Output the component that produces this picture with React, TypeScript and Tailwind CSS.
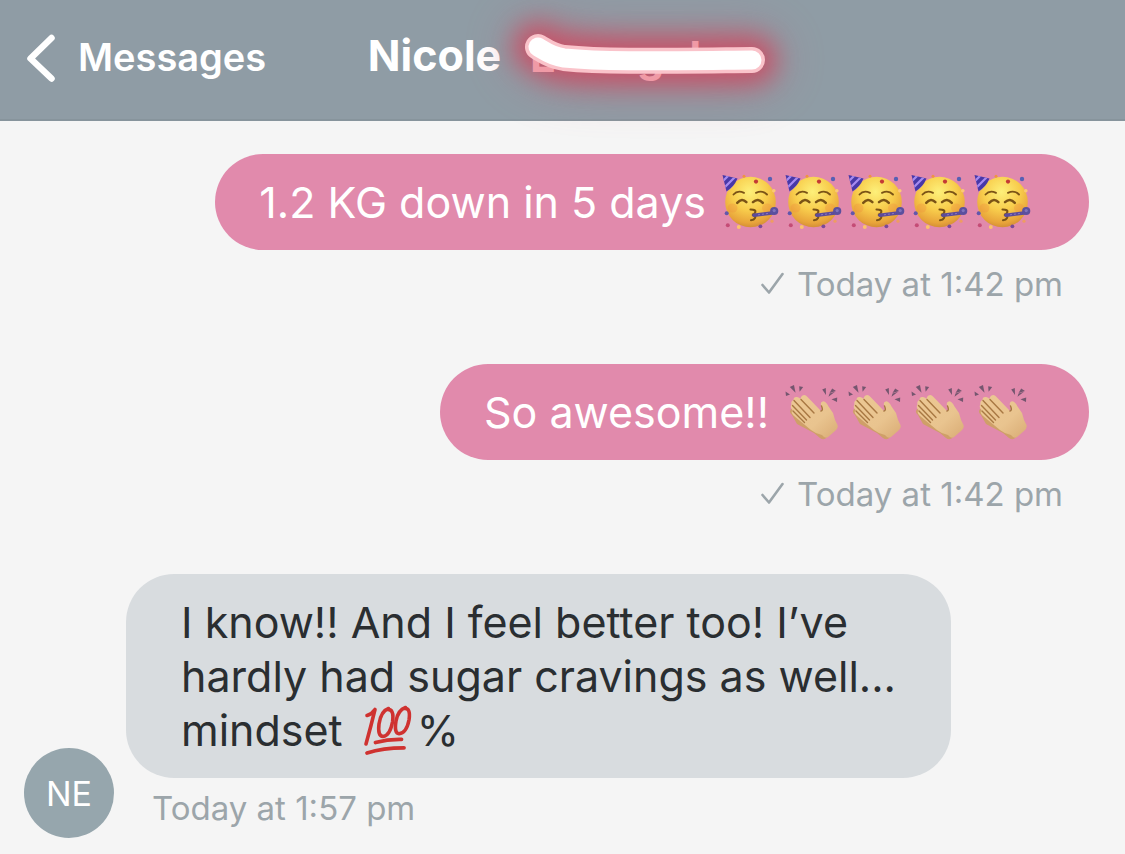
import type { ReactNode } from "react"

function PartyFace() {
  return (
    <svg viewBox="0 0 57 56" className="h-14 w-[57px] shrink-0" role="img" aria-label="partying face">
      <defs>
        <radialGradient id="party-skin" cx="0.48" cy="0.3" r="0.72">
          <stop offset="0" stopColor="#fdf07a" />
          <stop offset="0.5" stopColor="#f8cd4c" />
          <stop offset="0.85" stopColor="#e8a43a" />
          <stop offset="1" stopColor="#d08a35" />
        </radialGradient>
        <clipPath id="party-hat">
          <path d="M0.5 1 L15.5 4.5 Q12 13 4.5 17.5 Z" />
        </clipPath>
      </defs>
      <circle cx="28.5" cy="28" r="25.3" fill="url(#party-skin)" />
      <ellipse cx="10.5" cy="34" rx="5" ry="4.5" fill="#f08a3c" opacity="0.3" />
      <ellipse cx="45" cy="34" rx="5" ry="4.5" fill="#f08a3c" opacity="0.3" />
      <g clipPath="url(#party-hat)">
        <path d="M0 0h17v19H0z" fill="#4838a8" />
        <path d="M-1 9 L9 -1 M1 15 L15 1 M5 19 L19 6" stroke="#a78bf0" strokeWidth="2.2" />
      </g>
      <g fill="none" strokeLinecap="round" stroke="#7a5316">
        <path d="M11.5 20.5 Q15.5 15.8 22 18.8" strokeWidth="1.9" />
        <path d="M34 18.8 Q40.5 15.8 45 20.5" strokeWidth="1.9" />
        <path d="M15.2 28.8 Q20 23.5 24.4 28.2" strokeWidth="2.5" />
        <path d="M31 28.2 Q36 23.5 40.8 28.8" strokeWidth="2.5" />
        <path d="M28.5 35.5 Q34.5 35.5 33.2 38.5 Q32.5 40.5 30 40.7 Q34.5 41.5 33 44 Q32 46 29 46.2" strokeWidth="2.1" />
      </g>
      <path d="M32 41.2 L50 39" stroke="#5c4b9b" strokeWidth="3.6" strokeLinecap="round" />
      <path d="M36 40.8 L48 39.2" stroke="#8b78c0" strokeWidth="1" strokeDasharray="2 2" />
      <circle cx="52.2" cy="37" r="4.1" fill="#5b4f9e" />
      <circle cx="52.2" cy="36.6" r="1.6" fill="#7f73bd" />
      <circle cx="34" cy="7.6" r="2.1" fill="#c43b35" />
      <circle cx="48" cy="5" r="2.2" fill="#5760b4" />
      <circle cx="51.8" cy="16.8" r="1.8" fill="#fbc877" />
      <circle cx="22" cy="2.2" r="1.5" fill="#ef9440" />
      <circle cx="4.7" cy="39.3" r="2" fill="#6257ab" />
      <circle cx="5.8" cy="51.2" r="2" fill="#c44c76" />
      <circle cx="16.8" cy="53" r="2" fill="#fbc46b" />
      <circle cx="38.4" cy="52.3" r="1.9" fill="#7a4a97" />
      <circle cx="50" cy="47.2" r="1.6" fill="#ee9c62" />
    </svg>
  )
}

function ClappingHands() {
  return (
    <svg viewBox="0 0 57 58" className="h-[58px] w-[57px] shrink-0" role="img" aria-label="clapping hands">
      <defs>
        <linearGradient id="clap-skin" x1="0" y1="0" x2="1" y2="1">
          <stop offset="0" stopColor="#ecc894" />
          <stop offset="0.6" stopColor="#e9c48f" />
          <stop offset="1" stopColor="#d9ab74" />
        </linearGradient>
      </defs>
      <path
        d="M6 26 Q3.5 29 7 32 L12 41 L29 50 L35 55 Q39 58 42 54 L44 46 L30 30 Z"
        fill="#cf9f68"
      />
      <path
        d="M17.5 12.5 Q20 11 22.5 14 L36 28 Q38.5 27 36 22.5 Q35 18.5 38.5 18.2 Q41 18.5 43.5 23.5 L48 30 Q49.5 37 52.5 42 Q53.5 45 50 48 L43 54 Q40 56 37 52 Q31 51 26 47 L8.5 32.5 Q5.5 29.5 7.5 27 Q4.5 24 6.5 21.5 Q5.5 18 8.5 17 Q8.5 13.5 12 14 Q14.5 14.5 15.5 16 Q15.5 13.5 17.5 12.5 Z"
        fill="url(#clap-skin)"
      />
      <g stroke="#a87843" strokeWidth="1.4" strokeLinecap="round" fill="none">
        <path d="M16 16.5 L29 30" />
        <path d="M9 17.5 L25 34.5" />
        <path d="M7.5 22.5 L21.5 37" />
        <path d="M8 28 L19.5 39.5" />
        <path d="M36 28 Q38.5 27.5 36.5 23" />
      </g>
      <g fill="#75566f">
        <path d="M0.5 8.5 L5 11.5 L1 13 Z" />
        <path d="M4.8 4 L9 2 L10.5 9.8 Z" />
        <path d="M14.2 3.2 L18.2 4 L14.6 8.8 Z" />
        <path d="M37.2 6.4 L40.8 5 L41 12 Z" />
        <path d="M44.5 10 L47.2 5.4 L51 8 Z M44.5 10.5 L50 8.8 L43.5 13.8 Z" />
        <path d="M46.5 16.3 L52.2 14.6 L52 19 Z" />
      </g>
    </svg>
  )
}

function HundredPoints() {
  return (
    <svg viewBox="0 -2 50 54" className="mr-1 ml-2 inline-block h-[54px] w-[50px] align-top" role="img" aria-label="hundred points">
      <g fill="none" stroke="#cf3230" strokeLinecap="round" strokeLinejoin="round">
        <path d="M4 10.5 Q9 9 12 4.5 Q8 21 3 39" strokeWidth="3.6" />
        <path d="M25.5 3.5 Q18 6 16 19 Q14.5 31 20 31.5 Q27 30.5 29.5 17 Q31.5 3.5 24 4.5" strokeWidth="3.6" />
        <path d="M42.5 2.5 Q35 5 33 16 Q31 28.5 36 28.8 Q43.5 28 46 15 Q48 2.5 41 3.5" strokeWidth="3.6" />
        <path d="M12.5 37.5 Q25 34 38.5 34.3" strokeWidth="3.8" />
        <path d="M4 48 Q20 42.8 41 42.8" strokeWidth="3.8" />
      </g>
    </svg>
  )
}

// neon marker stroke over the surname, the glow spills out of the header
function Scribble() {
  const line = "M13 15 C20 19 25 24 39 26 C80 30 130 29 227 28"
  return (
    <svg viewBox="0 0 240 48" className="h-12 w-60 shrink-0 overflow-visible" aria-hidden="true">
      <defs>
        <filter id="glow-wide" x="-150" y="-150" width="540" height="350" filterUnits="userSpaceOnUse" colorInterpolationFilters="sRGB">
          <feGaussianBlur stdDeviation="24" />
        </filter>
        <filter id="glow-near" x="-80" y="-80" width="400" height="210" filterUnits="userSpaceOnUse" colorInterpolationFilters="sRGB">
          <feGaussianBlur stdDeviation="12" />
        </filter>
      </defs>
      <g fill="none" strokeLinecap="round" strokeLinejoin="round">
        <path d={line} stroke="#c8506a" strokeWidth="60" opacity="0.3" filter="url(#glow-wide)" />
        <path d={line} stroke="#cf465e" strokeWidth="48" opacity="0.8" filter="url(#glow-near)" />
      </g>
      <g className="text-[43px] font-bold" fill="#f09aa6">
        <text x="5" y="40">E</text>
        <text x="112" y="40">g</text>
        <text x="149" y="40">d</text>
      </g>
      <g fill="none" strokeLinecap="round" strokeLinejoin="round">
        <path d={line} stroke="#fac3ca" strokeWidth="26" />
        <path d={line} stroke="#ffffff" strokeWidth="19" />
      </g>
    </svg>
  )
}

function Sent({ time, children }: { time: string; children: ReactNode }) {
  return (
    <div className="flex flex-col items-end pr-9">
      <div className="flex h-24 items-center rounded-full bg-[#e18aac] pr-[58px] pl-11 text-[43px] text-white">{children}</div>
      <div className="mt-3 flex items-center pr-[26px] text-[33px] leading-11 text-[#9ca5aa]">
        <svg viewBox="0 0 24 24" className="mr-3 size-6" fill="none" stroke="currentColor" strokeWidth="2.6" aria-hidden="true">
          <path d="M1.5 13 L8 20.5 L21.5 2" strokeLinecap="round" strokeLinejoin="round" />
        </svg>
        <time>{time}</time>
      </div>
    </div>
  )
}

export default function App() {
  return (
    <div className="min-h-screen bg-[#f5f5f5] font-['Inter',sans-serif]">
      <header className="relative z-10 grid h-[121px] grid-cols-[1fr_auto_1fr] items-center border-b-2 border-[#87949c] bg-[#8f9ca5] pb-1 text-white">
        <a href="#" className="flex items-center gap-[22px] pl-6 text-[38px] font-semibold">
          <svg viewBox="0 0 32 50" className="h-[50px] w-8" fill="none" stroke="currentColor" strokeWidth="6.5" aria-hidden="true">
            <path d="M27.5 5 L6.5 25.5 L27.5 45.5" strokeLinecap="round" strokeLinejoin="round" />
          </svg>
          Messages
        </a>
        <h1 className="flex items-center gap-6 pb-1 pl-2 text-[43px] font-bold">
          Nicole
          <Scribble />
        </h1>
      </header>

      <main className="pt-[33px]">
        <div className="flex flex-col gap-[58px]">
          <Sent time="Today at 1:42 pm">
            1.2 KG down in 5 days
            <span className="ml-4 flex gap-[6px]">
              <PartyFace />
              <PartyFace />
              <PartyFace />
              <PartyFace />
              <PartyFace />
            </span>
          </Sent>
          <Sent time="Today at 1:42 pm">
            So awesome!!
            <span className="ml-4 flex gap-[6px]">
              <ClappingHands />
              <ClappingHands />
              <ClappingHands />
              <ClappingHands />
            </span>
          </Sent>
          <div className="flex items-end gap-3 pb-4 pl-6">
            <div className="flex size-[90px] shrink-0 items-center justify-center rounded-full bg-[#96a6ad] text-[34px] text-white">NE</div>
            <div className="pb-2">
              <p className="max-w-[825px] rounded-[48px] bg-[#d8dcdf] py-[21px] pr-11 pl-[55px] text-[43px] leading-[54px] text-[#2a2e31]">
                I know!! And I feel better too! I’ve hardly had sugar cravings as well...{" "}
                <span className="inline-block align-top">
                  mindset <HundredPoints />%
                </span>
              </p>
              <time className="mt-2 block pl-[26px] text-[33px] leading-11 text-[#9ca5aa]">Today at 1:57 pm</time>
            </div>
          </div>
        </div>
      </main>
    </div>
  )
}
